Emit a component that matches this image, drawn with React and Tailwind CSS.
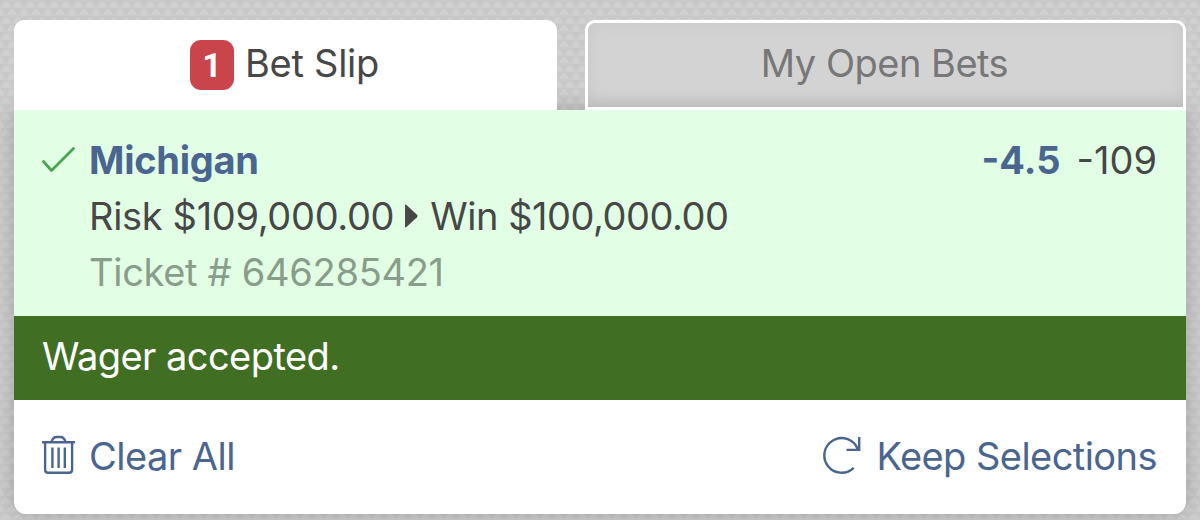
const TrashIcon = () => (
    <svg width="34" height="40" viewBox="0 0 34 40" fill="none" stroke="#4a6590" strokeWidth="2.4">
        <path d="M0 7.2H33" />
        <path d="M9.5 7C10.5 3.5 12 2 14.5 2H18.5C21 2 22.5 3.5 23.5 7" />
        <path d="M3.1 7.5V34.8Q3.1 37.8 6.1 37.8H27.1Q30.1 37.8 30.1 34.8V7.5" />
        <path d="M10.4 12.5V33M16.6 12.5V33M22.8 12.5V33" />
    </svg>
)

const RefreshIcon = () => (
    <svg width="38" height="40" viewBox="0 0 38 40" fill="none" stroke="#4a6590" strokeWidth="2.4">
        <path d="M30.7 32.8A17.3 17.3 0 1 1 34.8 14.2" />
        <path d="M36.2 2V14.9H23.5" />
    </svg>
)

const CheckIcon = () => (
    <svg width="34" height="28" viewBox="0 0 34 28" fill="none" stroke="#4aa350" strokeWidth="2.8" strokeLinecap="round" strokeLinejoin="round">
        <path d="M1.5 16.5L9.5 25.5L31.5 3.5" />
    </svg>
)

const Texture = () => (
    <svg className="absolute inset-0" width="1200" height="520">
        <defs>
            <pattern id="weave" width="12" height="16" patternUnits="userSpaceOnUse">
                <rect width="12" height="16" fill="#c9c9c9" />
                <path d="M0 7.5L6 0.5L12 7.5Z" fill="#d0d0d0" />
                <path d="M-6 15.5L0 8.5L6 15.5ZM6 15.5L12 8.5L18 15.5Z" fill="#d0d0d0" />
            </pattern>
        </defs>
        <rect width="1200" height="520" fill="url(#weave)" />
    </svg>
)

const App = () => {
    return (
        <div className="relative w-[1200px] h-[520px] overflow-hidden bg-[#cbcbcb] px-[14px] pt-[20px] font-['Inter',sans-serif] text-[38px] leading-[56px] text-[#474747]">
            <Texture />

            <div className="relative flex justify-between h-[90px]">
                <div className="relative z-10 flex justify-center w-[543px] h-[90px] pt-[15px] pr-[2px] bg-white rounded-t-[10px]">
                    <span className="flex items-center justify-center w-[44px] h-[50px] mt-[5px] mr-[11px] font-['Roboto',sans-serif] text-[34px] font-bold text-white bg-[#c9444b] rounded-[11px]">1</span>
                    <span className="tracking-[-0.25px]">Bet Slip</span>
                </div>

                <div className="relative z-10 w-[601px] h-[90px] pt-[12px] pr-[2px] text-center tracking-[-0.5px] text-[#777] bg-[#d3d3d3] border-[3px] border-white rounded-t-[10px] shadow-[inset_0_-14px_16px_-10px_#b9b9b9,inset_0_0_16px_#c8c8c8]">
                    My Open Bets
                </div>
            </div>

            <div className="relative h-[404px] rounded-b-[12px] shadow-[0_0_22px_rgba(0,0,0,0.22)]">
                <div className="h-[206px] pt-[22px] pl-[28px] pr-[29px] bg-[#e2ffe5]">
                    <div className="flex">
                        <div className="w-[47px] pt-[13px]">
                            <CheckIcon />
                        </div>
                        <span className="font-bold tracking-[-0.25px] text-[#4a6590]">Michigan</span>
                        <span className="ml-auto mr-[16px] font-bold text-[#4a6590]">-4.5</span>
                        <span>-109</span>
                    </div>
                    <div className="flex items-center pl-[47px]">
                        <span className="tracking-[-0.33px]">Risk $109,000.00</span>
                        <svg className="ml-[11px] mr-[12px]" width="13" height="24" viewBox="0 0 13 24" fill="#474747">
                            <path d="M0 1.5Q0 0 1.5 1L12 10.8Q13 12 12 13.2L1.5 23Q0 24 0 22.5Z" />
                        </svg>
                        <span className="tracking-[-0.48px]">Win $100,000.00</span>
                    </div>
                    <div className="pl-[47px] tracking-[-0.3px] text-[#889d8a]">
                        <span>Ticket # 646285421</span>
                    </div>
                </div>

                <div className="h-[84px] pt-[12px] pl-[28px] tracking-[-0.55px] text-white bg-[#406e22]">
                    <span>Wager accepted.</span>
                </div>

                <div className="flex justify-between h-[114px] pt-[28px] pl-[28px] pr-[29px] text-[#4a6590] bg-white rounded-b-[12px]">
                    <div className="flex">
                        <div className="w-[47px] pt-[7px]">
                            <TrashIcon />
                        </div>
                        <span className="tracking-[-0.5px]">Clear All</span>
                    </div>
                    <div className="flex">
                        <div className="w-[53px] pt-[7px]">
                            <RefreshIcon />
                        </div>
                        <span className="tracking-[-0.55px]">Keep Selections</span>
                    </div>
                </div>
            </div>
        </div>
    )
}

export default App
